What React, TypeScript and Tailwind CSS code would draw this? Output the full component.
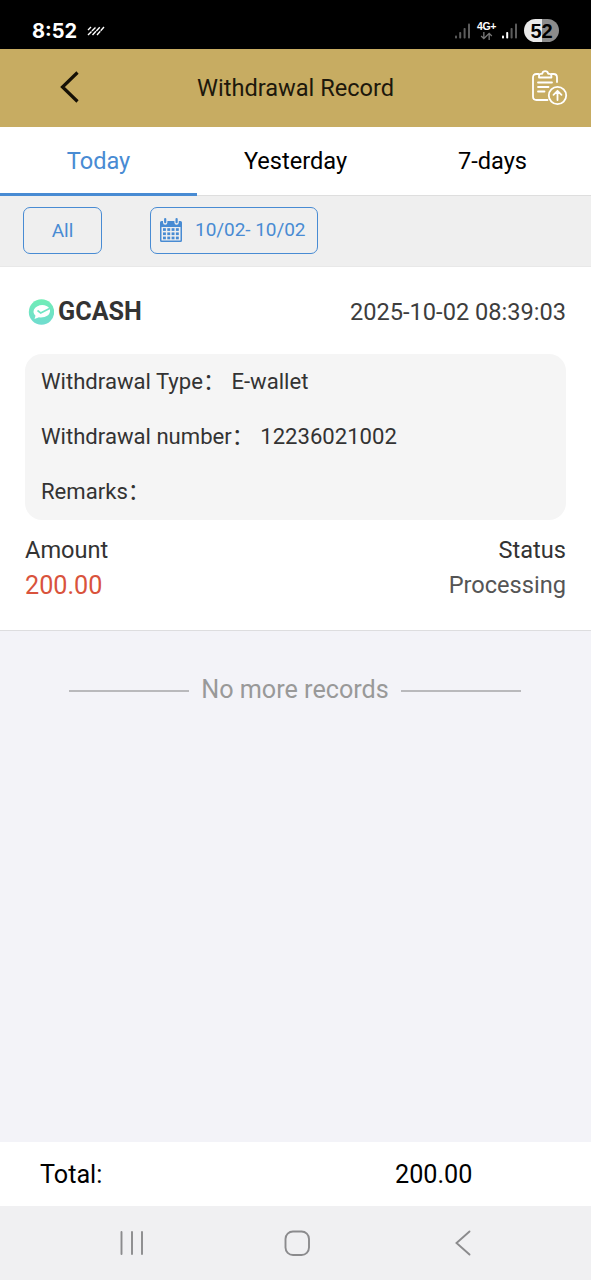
import type { ReactNode } from "react";

function Signal({ lit }: { lit: number }) {
  const bars = [
    { x: 0, h: 3 },
    { x: 4.2, h: 6.5 },
    { x: 8.6, h: 10.5 },
    { x: 13, h: 15 },
  ];
  return (
    <svg width="16" height="16" viewBox="0 0 16 16" className="shrink-0">
      {bars.map((b, i) => (
        <rect key={b.x} x={b.x} y={15.5 - b.h} width="2" height={b.h} rx="0.8" fill={i < lit ? "#ffffff" : "#5c5c5c"} />
      ))}
    </svg>
  );
}

function StatusBar() {
  return (
    <div className="flex h-[49px] shrink-0 items-start bg-black pl-[32px] pr-[32px] text-white">
      <span className="mt-[18px] font-['Inter'] text-[20px] leading-[26px] font-bold">8:52</span>
      <svg width="18" height="10" viewBox="0 0 18 10" className="mt-[26px] ml-[10px]" stroke="#fff" strokeWidth="1.4" fill="none">
        <path d="M1 4 4 1M1 9 9 1M5.5 9 13 1M10 9 17 1" strokeDasharray="5 0.6" />
      </svg>
      <div className="ml-auto flex items-start">
        <div className="mt-[23px] mr-[6px]"><Signal lit={0} /></div>
        <div className="mt-[21px] mr-[6px] flex w-[19px] flex-col items-center">
          <span className="font-['Liberation_Sans'] text-[10.5px] leading-[11px] font-bold tracking-[-0.3px]">4G+</span>
          <svg width="13" height="8" viewBox="0 0 14 9" fill="none" stroke="#777" strokeWidth="1.5">
            <path d="M4 0v7M1 4.5 4 7.5 7 4.5M10 9V1.5M7 4.5 10 1.5 13 4.5" />
          </svg>
        </div>
        <div className="mt-[23px] mr-[6px]"><Signal lit={2} /></div>
        <div className="mt-[19px] flex h-[23px] w-[35px] items-center justify-center rounded-full bg-linear-to-r from-[#e9e9e9] from-52% to-[#8c8c8c] to-52% pt-[1px] font-['Liberation_Sans'] text-[20px] font-bold text-black">
          52
        </div>
      </div>
    </div>
  );
}

function Header() {
  return (
    <header className="grid h-[78px] shrink-0 grid-cols-[197px_197px_197px] items-center bg-[#c7ac62]">
      <svg width="20" height="34" viewBox="0 0 20 34" className="mt-[-2px] ml-[60px]" fill="none" stroke="#151006" strokeWidth="3.2">
        <path d="M17.500 2.500 2.500 17l15 14.500" />
      </svg>
      <h1 className="pt-[1px] text-center text-[23.6px] whitespace-nowrap text-[#1d180c]">Withdrawal Record</h1>
      <svg width="36" height="36" viewBox="0 0 36 36" className="ml-[138px]" fill="none" stroke="#fff" strokeWidth="1.8" strokeLinecap="round" strokeLinejoin="round">
        <path d="M6.500 4H4.500Q1 4 1 7.500v19q0 3.500 3.500 3.500h11M19.500 4h2q3.500 0 3.500 3.500v4.500" />
        <path d="M7 7.500V6q0-2.200 2-2.200h1.200q.5-2.600 3-2.600t3 2.600h1.200q2 0 2 2.200v1.500z" />
        <path d="M6 12.500h14M6 17h10.500M6 21.500h6.500" />
        <circle cx="25.500" cy="25.500" r="8.700" />
        <path d="M25.500 30v-9.200M21.500 24.800l4-4 4 4" />
      </svg>
    </header>
  );
}

function Tab({ children, active }: { children: ReactNode; active?: boolean }) {
  return (
    <button
      className={
        active
          ? "flex items-center justify-center border-b-[3px] border-[#488bd3] pt-[3px] text-[#488bd3]"
          : "flex items-center justify-center border-b border-[#dedede] pt-[2px] text-black"
      }
    >
      {children}
    </button>
  );
}

function Detail({ label, value }: { label: string; value?: string }) {
  return (
    <div className="flex h-[55px] items-center">
      <span>{label}</span>
      <span className="mt-[-3px] w-[22px] font-['Noto_Sans_CJK_SC',sans-serif]">：</span>
      <span className="ml-[6.500px]">{value}</span>
    </div>
  );
}

export default function App() {
  return (
    <div className="flex h-[1280px] w-[591px] flex-col overflow-hidden bg-[#f3f3f8] font-['Roboto',sans-serif]">
      <StatusBar />
      <Header />
      <nav className="grid h-[69px] shrink-0 grid-cols-3 bg-white text-[23.6px]">
        <Tab active>Today</Tab>
        <Tab>Yesterday</Tab>
        <Tab>7-days</Tab>
      </nav>
      <div className="flex h-[71px] shrink-0 items-center border-b border-[#e8e8e8] bg-[#efefef] pb-[1px] pl-[23px] text-[19px] text-[#488bd3]">
        <button className="flex h-[47px] w-[79px] items-center justify-center rounded-[7px] border border-[#488bd3] pt-[1px]">All</button>
        <button className="ml-[48px] flex h-[47px] w-[168px] items-center rounded-[7px] border border-[#488bd3] pl-[9px] whitespace-nowrap">
          <svg width="22" height="24" viewBox="0 0 22 24" fill="#488bd3" className="mt-[-2px] mr-[13px] shrink-0">
            <path fillRule="evenodd" d="M1.500 3H3v1.500a2.200 2.200 0 0 0 4.400 0V3h7v1.500a2.200 2.200 0 0 0 4.400 0V3h1.700Q22 3 22 4.500v18q0 1.500-1.500 1.500h-19Q0 24 0 22.500v-18Q0 3 1.500 3zM1.500 9v13.500h19V9z" />
            <rect x="4.100" y="0" width="2.200" height="5.300" rx="1.100" />
            <rect x="15.500" y="0" width="2.200" height="5.300" rx="1.100" />
            {[10.2, 14.4, 18.6].map((y) =>
              [3, 7.3, 11.6, 15.9].map((x) => <rect key={`${x}-${y}`} x={x} y={y} width="2.900" height="2.700" />),
            )}
          </svg>
          <span className="tracking-[-0.05px]">10/02- 10/02</span>
        </button>
      </div>
      <main className="h-[364px] shrink-0 border-b border-[#dddddf] bg-white px-[25px] text-[#333]">
        <div className="flex h-[87px] items-center pt-[3px]">
          <svg width="26" height="26" viewBox="0 0 26 26" className="ml-[3px]">
            <defs>
              <linearGradient id="mint" x1="0" y1="0" x2="0" y2="1">
                <stop offset="0" stopColor="#70edb5" />
                <stop offset="1" stopColor="#70dcd0" />
              </linearGradient>
            </defs>
            <circle cx="13.500" cy="13" r="12.700" fill="url(#mint)" />
            <path d="M9 7.500q5-2.500 9.500-.5 4 2 3.500 5.500-.5 4-5.500 5.500-3 .8-5.500.3L6.500 20l1-3.200Q4.500 14 6 10.500 7 8.500 9 7.500z" fill="#fff" />
            <path d="m9.500 11.500 3.200 2.500 9.300-4.800" fill="none" stroke="#70e5c3" strokeWidth="1.600" />
          </svg>
          <span className="ml-[4px] text-[25.2px] font-bold">GCASH</span>
          <time className="ml-auto pt-[1px] text-[23.6px] text-[#3d3d3d]">2025-10-02 08:39:03</time>
        </div>
        <section className="h-[166px] rounded-[17px] bg-[#f5f5f5] pl-[16px] text-[22.1px]">
          <Detail label="Withdrawal Type" value="E-wallet" />
          <Detail label="Withdrawal number" value="12236021002" />
          <Detail label="Remarks" />
        </section>
        <div className="mt-[13px] flex h-[35px] items-center justify-between text-[23.6px]">
          <span>Amount</span>
          <span>Status</span>
        </div>
        <div className="flex h-[35px] items-center justify-between">
          <span className="text-[25.2px] text-[#d9533c]">200.00</span>
          <span className="text-[23.6px] text-[#555]">Processing</span>
        </div>
      </main>
      <div className="mt-[41px] flex h-[36px] items-center justify-center pr-[1px] text-[25.2px] text-[#999]">
        <span className="mt-px h-[2px] w-[120px] bg-[#b9b9bc]" />
        <span className="w-[212px] text-center whitespace-nowrap">No more records</span>
        <span className="mt-px h-[2px] w-[120px] bg-[#b9b9bc]" />
      </div>
      <footer className="mt-auto flex h-[64px] shrink-0 items-center bg-white pt-[2px] pl-[40px] text-[25.2px] text-black">
        <span className="w-[355px]">Total:</span>
        <span>200.00</span>
      </footer>
      <div className="flex h-[74px] shrink-0 items-start bg-[#f0f0f2] pt-[24px] pl-[119px]">
        <svg width="360" height="27" viewBox="0 0 360 27" fill="none" stroke="#8b8b8d" strokeWidth="1.900" strokeLinecap="round">
          <path d="M2.500 2v22M13 2v22M23 2v22" />
          <rect x="166.500" y="1.500" width="23.500" height="23.500" rx="7.500" />
          <path d="M350.500 1.500 337.500 13l13 11.500" />
        </svg>
      </div>
    </div>
  );
}
